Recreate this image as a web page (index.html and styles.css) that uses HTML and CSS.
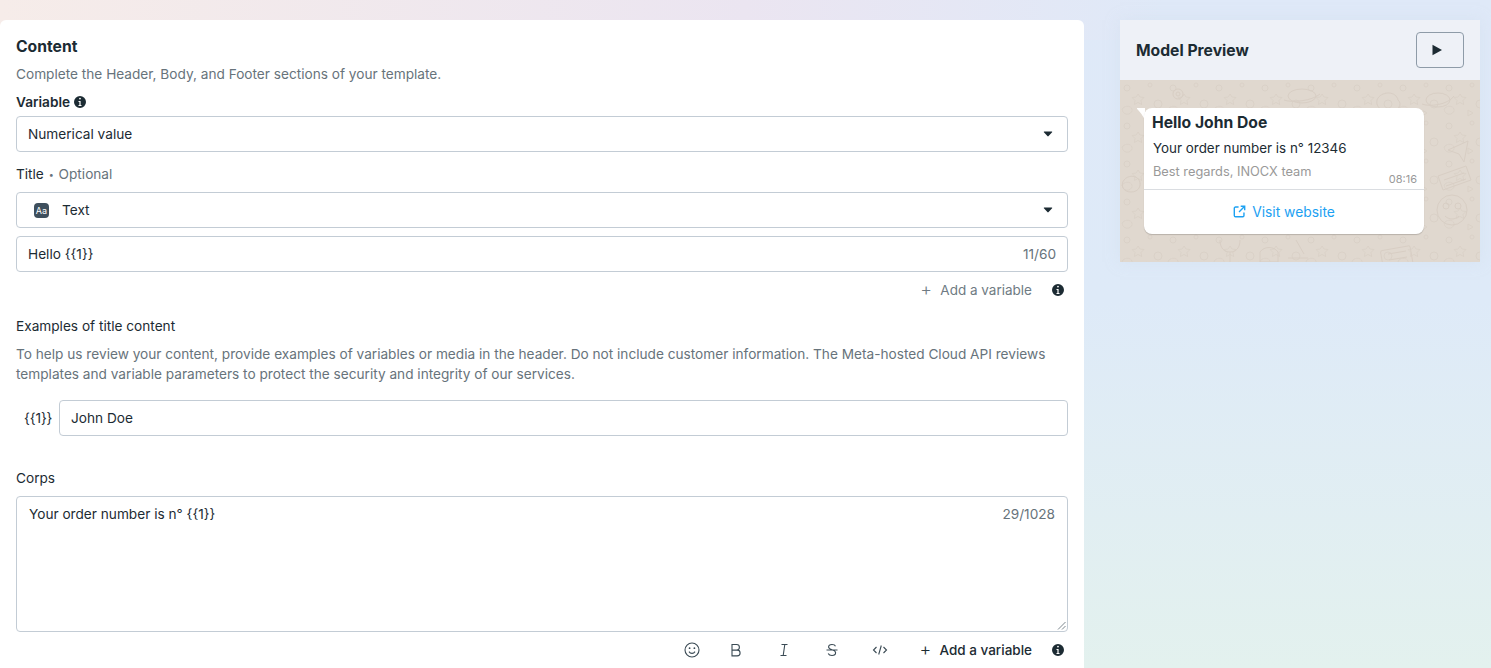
FILE: index.html
```html
<!DOCTYPE html>
<html lang="en">
<head>
<meta charset="utf-8">
<title>Model editor</title>
<link rel="stylesheet" href="styles.css">
</head>
<body>
<div class="page">
  <main class="card">
    <h1 class="title">Content</h1>
    <p class="muted sub">Complete the Header, Body, and Footer sections of your template.</p>
    <div class="label strong"><span>Variable</span><svg class="info" viewBox="0 0 12 12"><use href="#i-info"/></svg></div>
    <div class="field select">
      <span>Numerical value</span>
      <svg class="caret" viewBox="0 0 12 8"><path d="M1 .8h10a.6.6 0 0 1 .5 1L6.800 6.800a1 1 0 0 1-1.600 0L.5 1.800a.6.6 0 0 1 .5-1z"/></svg>
    </div>
    <div class="title-label">Title <span class="dot">•</span> <span class="muted">Optional</span></div>
    <div class="field select">
      <span class="type">
        <span class="aa">Aa</span>
        <span>Text</span>
      </span>
      <svg class="caret" viewBox="0 0 12 8"><path d="M1 .8h10a.6.6 0 0 1 .5 1L6.800 6.800a1 1 0 0 1-1.600 0L.5 1.800a.6.6 0 0 1 .5-1z"/></svg>
    </div>
    <div class="field input-gap">
      <span>Hello {{1}}</span>
      <span class="count">11/60</span>
    </div>
    <div class="tools tools-top">
      <span class="add disabled"><span class="plus">+</span>Add a variable</span>
      <svg class="info" viewBox="0 0 12 12"><use href="#i-info"/></svg>
    </div>
    <div class="label examples">Examples of title content</div>
    <p class="muted desc">To help us review your content, provide examples of variables or media in the header. Do not include customer information. The Meta-hosted Cloud API reviews templates and variable parameters to protect the security and integrity of our services.</p>
    <div class="var-row">
      <span class="var-name">{{1}}</span>
      <div class="field grow">John Doe</div>
    </div>
    <div class="label corps">Corps</div>
    <div class="field area">
      <span>Your order number is n° {{1}}</span>
      <span class="count">29/1028</span>
      <svg class="grip" viewBox="0 0 10 10"><path d="M9.500 2 2 9.500M9.500 6 6 9.500"/></svg>
    </div>
    <div class="tools tools-bottom">
      <svg class="ti ti-smile" viewBox="0 0 16 16"><circle cx="8" cy="8" r="7"/><path d="M5 9.600c.7 1.200 1.700 1.800 3 1.800s2.300-.6 3-1.800"/><circle class="fill" cx="5.600" cy="6.200" r=".9"/><circle class="fill" cx="10.400" cy="6.200" r=".9"/></svg>
      <svg class="ti" viewBox="0 0 16 16"><path d="M4 2.500h4.600a2.800 2.800 0 0 1 0 5.600H4zM4 8.100h5.200a2.900 2.900 0 0 1 0 5.800H4z"/></svg>
      <svg class="ti" viewBox="0 0 16 16"><path d="M5.500 2.500h6M4.500 13.500h6M8.800 2.500 7.200 13.500"/></svg>
      <svg class="ti" viewBox="0 0 16 16"><path d="M11.500 4.200C11 3 9.800 2.500 8 2.500c-2 0-3.400.9-3.400 2.600 0 3.400 7 2 7 5.700 0 1.800-1.500 2.700-3.600 2.700-1.900 0-3.200-.6-3.800-2M2.500 8h11"/></svg>
      <svg class="ti" viewBox="0 0 16 16"><path d="M4.500 5 1.500 8l3 3M11.500 5l3 3-3 3M9.300 3.500 6.700 12.500"/></svg>
      <span class="add"><span class="plus">+</span>Add a variable</span>
      <svg class="info" viewBox="0 0 12 12"><use href="#i-info"/></svg>
    </div>
  </main>
  <aside class="preview">
    <header class="preview-head">
      <h2 class="preview-title">Model Preview</h2>
      <button class="play" type="button" aria-label="Play">
        <svg viewBox="0 0 12 12"><path d="M1.500.8v10.400L11 6z"/></svg>
      </button>
    </header>
    <div class="chat">
      <svg class="doodles" viewBox="0 0 360 182" preserveAspectRatio="none">
        <defs>
          <pattern id="tiny" width="46" height="38" patternUnits="userSpaceOnUse">
            <g fill="none" stroke="#d9d0c6" stroke-width=".9">
              <circle cx="7" cy="8" r="3"/><circle cx="30" cy="5" r="2"/><path d="M18 14l2 3 4 .5-3 3 .7 4-3.700-2-3.600 2 .7-4-3-3 4-.5z"/>
              <circle cx="38" cy="24" r="4"/><path d="M3 28c3-3 8-2 9 1s-3 6-6 5-5-4-3-6zM26 30l5 3-5 3z"/>
            </g>
          </pattern>
        </defs>
        <rect width="360" height="182" fill="url(#tiny)"/>
        <g fill="none" stroke="#d8cec4" stroke-width="1">
          <circle cx="58" cy="14" r="5"/><circle cx="58" cy="14" r="2"/>
          <ellipse cx="182" cy="16" rx="14" ry="7"/><path d="M164 20c8 3 28 1 36-6"/>
          <path d="M258 18c5-7 18-7 20 2 5 4 0 12-8 10-10 3-16-6-12-12z"/>
          <ellipse cx="318" cy="20" rx="12" ry="7"/><path d="M302 24c7 3 26 1 32-8"/>
          <path d="M328 70l20-9-4 21-5-8zM318 96l28-10 5 14-28 10zM324 100l20-7M326 106l20-7"/>
          <circle cx="332" cy="130" r="15"/><circle cx="326" cy="126" r="3"/><circle cx="338" cy="126" r="3"/><path d="M325 136c4 4 10 4 14 0"/>
          <rect x="262" y="168" width="30" height="22" rx="2" transform="rotate(-10 277 179)"/><path d="M268 174l18-3M269 180l18-3"/>
          <path d="M100 160c0 8 4 12 10 12s10-4 10-12M110 172v10M140 172c4-6 14-6 18 0v10h-18zM176 160l8 14M168 178h20"/>
          <path d="M4 100c4-5 12-5 15 0s0 12-8 12-11-7-7-12z"/>
        </g>
      </svg>
      <div class="bubble-wrap">
        <svg class="tail" viewBox="0 0 8 12"><path d="M0 0h8v12C6 8 3 4 .4 1.300.0.900-.2 0 0 0z"/></svg>
        <article class="bubble">
          <div class="bubble-body">
            <div class="b-title">Hello John Doe</div>
            <div class="b-text">Your order number is n° 12346</div>
            <div class="b-foot">
              <span>Best regards, INOCX team</span>
              <time class="b-time">08:16</time>
            </div>
          </div>
          <div class="b-link">
            <svg viewBox="0 0 14 14"><path d="M6 2.200H2.700A1.300 1.300 0 0 0 1.400 3.500v7.800a1.300 1.300 0 0 0 1.300 1.300h7.800a1.300 1.300 0 0 0 1.300-1.300V8M8.300 1.400h4.300v4.300M12.300 1.700 6.500 7.500"/></svg>
            <span>Visit website</span>
          </div>
        </article>
      </div>
    </div>
  </aside>
</div>
<svg class="defs" aria-hidden="true"><defs>
  <symbol id="i-info" viewBox="0 0 12 12"><path fill-rule="evenodd" d="M6 0a6 6 0 1 1 0 12A6 6 0 0 1 6 0zm-.9 2.600a.9.900 0 1 0 1.800 0 .9.900 0 0 0-1.800 0zM4.500 5v1h.9v3H4.500v1h3V9h-.9V5z"/></symbol>
</defs></svg>
</body>
</html>
```

FILE: styles.css
```css
* { box-sizing: border-box; }
html, body { margin: 0; height: 668px; overflow: hidden; }
body {
  font-family: Inter, "Liberation Sans", sans-serif;
  font-size: 13.650px;
  line-height: 20px;
  color: #1c2b33;
  background:
    linear-gradient(90deg, #f6ece9 0%, #ebe5f1 50%, #dfe9f8 78%) top / 100% 40px no-repeat,
    linear-gradient(180deg, #dfe9f8 0%, #deeaf8 45%, #e3f1ee 100%);
}
.defs { position: absolute; width: 0; height: 0; }
.page { display: flex; align-items: flex-start; gap: 36px; padding: 20px 11px 0 0; height: 668px; }
.card {
  flex: 0 0 1084px;
  height: 648px;
  background: #fff;
  border-radius: 6px 6px 0 0;
  padding: 17px 16px 0;
}
.title { margin: 0; font-size: 15.700px; line-height: 20px; font-weight: 700; }
.muted { color: #67737b; }
.sub { margin: 7px 0 0; }
p { margin: 0; }
.label { display: flex; align-items: center; gap: 4px; height: 20px; line-height: 20px; }
.strong { font-weight: 600; margin-top: 8px; }
.info { width: 12px; height: 12px; fill: #1c2b33; flex: none; }
.field {
  display: flex;
  align-items: center;
  justify-content: space-between;
  height: 36px;
  padding: 0 11px;
  border: 1px solid #c3ccd5;
  border-radius: 4px;
  background: #fff;
  white-space: nowrap;
}
.select { margin-top: 4px; padding-right: 14px; }
.caret { width: 10px; height: 6px; fill: #1c2b33; }
.title-label { margin-top: 12px; height: 20px; }
.dot { color: #67737b; font-size: 9px; margin: 0 1px; vertical-align: 1px; }
.title-label + .select { margin-top: 8px; }
.type { display: flex; align-items: center; gap: 13px; padding-left: 6px; }
.aa {
  display: flex; align-items: center; justify-content: center;
  width: 15px; height: 15px;
  border-radius: 4px;
  background: #3e4f5d;
  color: #fff;
  font-size: 9px;
  line-height: 1;
}
.input-gap { margin-top: 8px; }
.count { color: #67737b; }
.tools { display: flex; align-items: center; justify-content: flex-end; height: 20px; padding-right: 4px; }
.tools-top { margin-top: 8px; gap: 20px; }
.add { display: flex; align-items: center; font-size: 13.500px; font-weight: 500; color: #1c2b33; white-space: nowrap; }
.add.disabled { color: #6f7b83; font-weight: 400; }
.plus { font-size: 18px; font-weight: 300; width: 20px; }
.examples { margin-top: 16px; }
.desc { margin-top: 8px; }
.var-row { display: flex; align-items: center; gap: 8px; margin-top: 16px; padding-left: 8px; }
.var-name { flex: 0 0 27px; min-width: 0; white-space: nowrap; letter-spacing: -.1px; }
.grow { flex: 1; }
.corps { margin-top: 32px; }
.area {
  position: relative;
  margin-top: 8px;
  height: 136px;
  align-items: flex-start;
  padding: 7px 12px;
}
.grip { position: absolute; right: 1px; bottom: 1px; width: 10px; height: 10px; fill: none; stroke: #7d878e; stroke-width: 1; }
.tools-bottom { margin-top: 8px; gap: 32px; }
.tools-bottom .info { margin-left: -12px; }
.ti { width: 16px; height: 16px; fill: none; stroke: #3a4a54; stroke-width: 1.100; flex: none; }
.ti-smile { margin-right: -4px; }
.ti .fill { fill: #3a4a54; stroke: none; }

.preview { flex: 0 0 360px; box-shadow: 0 0 12px rgba(210, 222, 238, .5); }
.preview-head {
  display: flex; align-items: center; justify-content: space-between;
  height: 60px;
  padding: 0 16px;
  background: #eef1f7;
}
.preview-title { margin: 0; font-size: 15.700px; font-weight: 700; line-height: 20px; color: #1c2b33; position: relative; top: 1px; }
.play {
  display: flex; align-items: center; justify-content: center;
  width: 48px; height: 36px;
  padding: 0;
  border: 1px solid #8e9ba8;
  border-radius: 4px;
  background: transparent;
}
.play svg { width: 12px; height: 12px; fill: #1c2b33; margin-left: -6px; }
.chat { position: relative; height: 182px; padding: 28px 56px 0 24px; background: #e0d8cf; overflow: hidden; }
.doodles { position: absolute; inset: 0; width: 100%; height: 100%; }
.bubble-wrap { position: relative; }
.tail { position: absolute; left: -7px; top: 0; width: 8px; height: 12px; fill: #fff; }
.bubble {
  position: relative;
  height: 126px;
  border-radius: 8px;
  background: #fff;
  box-shadow: 0 1px 1px rgba(0, 0, 0, .18);
}
.bubble-body { height: 82px; padding: 5px 7px 0 8px; border-bottom: 1px solid #dadde1; }
.b-title { font-size: 15.700px; font-weight: 700; line-height: 20px; }
.b-text { margin-top: 5px; font-size: 13.400px; line-height: 20px; padding-left: 1px; }
.b-foot { display: flex; justify-content: space-between; margin-top: 4px; padding-left: 1px; font-size: 12.800px; line-height: 20px; color: #999; }
.b-time { font-size: 11px; position: relative; top: 7px; }
.b-link {
  display: flex; align-items: center; justify-content: center; gap: 6px;
  height: 43px;
  color: #1da1f2;
  font-size: 13.850px;
}
.b-link svg { width: 13px; height: 13px; fill: none; stroke: #1da1f2; stroke-width: 1.500; }
```
